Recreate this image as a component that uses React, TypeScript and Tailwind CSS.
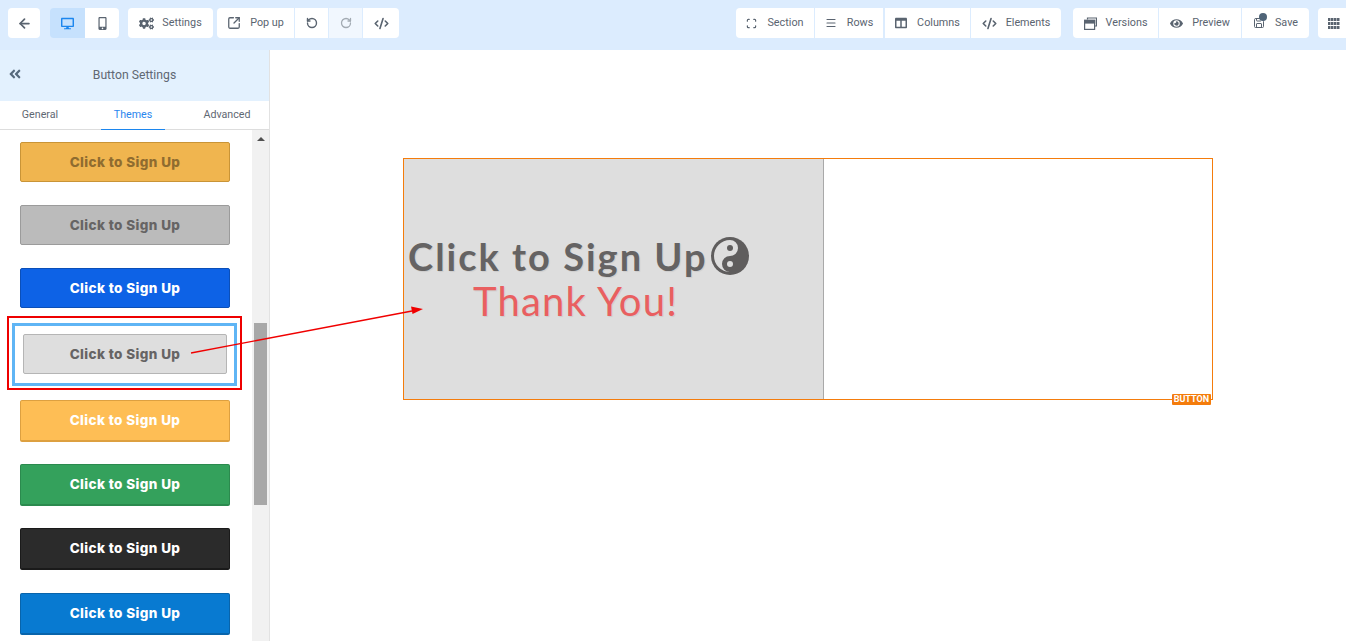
import React from 'react';
import { ArrowLeft, SquareArrowOutUpRight, RotateCcw, RotateCw, CodeXml, Scan, Menu, Save } from 'lucide-react';
import { FaCogs, FaAngleDoubleLeft, FaDesktop, FaMobileAlt, FaColumns, FaEye } from 'react-icons/fa';

type Theme = { cls: string; text: string };

const themes: Theme[] = [
  { cls: 'h-[40px] mb-[23px] bg-[#f0b54f] border-[#c99437]', text: 'text-[#8f6c2f]' },
  { cls: 'h-[40px] mb-[23px] bg-[#bbbbbb] border-[#9b9b9b]', text: 'text-[#666464]' },
  { cls: 'h-[40px] mb-[8px] bg-[#0d62e6] border-[#0b4fb8]', text: 'text-white' },
];

const themesBelow: Theme[] = [
  { cls: 'h-[42px] mb-[22px] bg-[#febe55] border-[#dda040] border-b-2', text: 'text-white -mt-px' },
  { cls: 'h-[42px] mb-[22px] bg-[#34a15c] border-[#2b8a4e] border-b-2', text: 'text-white -mt-px' },
  { cls: 'h-[42px] mb-[23px] bg-[#2b2b2b] border-[#1a1a1a] border-b-2', text: 'text-white' },
  { cls: 'h-[42px] bg-[#087ad1] border-[#0864ab] border-b-2', text: 'text-white -mt-px' },
];

function YinYang() {
  return (
    <svg width="38" height="38" viewBox="-19 -19 38 38" className="ml-[4px] shrink-0">
      <circle r="19" fill="#5f5d5d" />
      <path d="M0,-16 A16,16 0 0 0 0,16 A8,8 0 0 1 0,0 A8,8 0 0 0 0,-16 Z" fill="#dedede" />
      <circle cy="-8" r="3" fill="#5f5d5d" />
      <circle cy="8" r="3" fill="#dedede" />
    </svg>
  );
}

function VersionsIcon() {
  return (
    <svg width="13" height="13" viewBox="0 0 13 13" fill="none" stroke="currentColor" strokeWidth="1.2">
      <path d="M3.5 2.5V1h9v8H11" />
      <rect x="0.6" y="3.4" width="10" height="9" />
      <rect x="0.6" y="3.4" width="10" height="2.6" fill="currentColor" />
    </svg>
  );
}

function GridIcon() {
  return (
    <svg width="12" height="11" viewBox="0 0 12 11" fill="currentColor">
      {[0, 4, 8].map((y) =>
        [0, 3, 6, 9].map((x) => <rect key={`${x}-${y}`} x={x} y={y} width="2.5" height="3" />)
      )}
    </svg>
  );
}

function ToolBtn({ icon, label, className = '' }: { icon: React.ReactNode; label?: string; className?: string }) {
  return (
    <div className={`h-[30px] shrink-0 flex items-center justify-center bg-white text-[#5a6470] text-[10.8px] ${className}`}>
      {icon}
      {label && <span>{label}</span>}
    </div>
  );
}

function ThemeButton({ theme }: { theme: Theme }) {
  return (
    <div className={`w-[210px] ml-[20px] flex items-center justify-center rounded-[2px] border ${theme.cls}`}>
      <span className={`font-['Inter',sans-serif] font-extrabold text-[13.5px] tracking-[0.4px] ${theme.text}`}>Click to Sign Up</span>
    </div>
  );
}

export default function App() {
  return (
    <div className="relative w-[1346px] h-[641px] overflow-hidden bg-white font-['Roboto',sans-serif]">
      {/* top bar */}
      <header className="h-[50px] bg-[#dcecfe] flex items-start pt-[8px] pl-[8px]">
        <ToolBtn className="w-[32px] rounded-[4px]" icon={<ArrowLeft size={15} strokeWidth={2.8} />} />
        <div className="ml-[10px] shrink-0 flex rounded-[4px] overflow-hidden">
          <ToolBtn className="w-[35px] !bg-[#c6e1fd] !text-[#1c86ee]" icon={<FaDesktop size={13} />} />
          <ToolBtn className="w-[34px]" icon={<FaMobileAlt size={13} />} />
        </div>
        <ToolBtn className="ml-[9px] w-[85px] rounded-[4px] gap-[8px]" icon={<FaCogs size={15} />} label="Settings" />
        <div className="ml-[4px] shrink-0 flex gap-[1px] rounded-[4px] overflow-hidden">
          <ToolBtn className="w-[77px] gap-[9px]" icon={<SquareArrowOutUpRight size={14} strokeWidth={2.2} />} label="Pop up" />
          <ToolBtn className="w-[33px]" icon={<RotateCcw size={12} strokeWidth={2.8} />} />
          <ToolBtn className="w-[33px] !bg-[#f1f7fe] !text-[#a3abb3]" icon={<RotateCw size={12} strokeWidth={2.6} />} />
          <ToolBtn className="w-[36px]" icon={<CodeXml size={15} strokeWidth={2.6} />} />
        </div>
        <div className="ml-[337px] shrink-0 flex gap-[1px] rounded-[4px] overflow-hidden">
          <ToolBtn className="w-[78px] gap-[10px]" icon={<Scan size={11} strokeWidth={2.6} />} label="Section" />
          <ToolBtn className="w-[68px] gap-[10px]" icon={<Menu size={12} strokeWidth={2.2} />} label="Rows" />
          <ToolBtn className="ml-[1px] w-[85px] gap-[10px]" icon={<FaColumns size={12} />} label="Columns" />
          <ToolBtn className="w-[90px] gap-[9px]" icon={<CodeXml size={15} strokeWidth={2.6} />} label="Elements" />
        </div>
        <div className="ml-[12px] shrink-0 flex gap-[1px] rounded-[4px] overflow-hidden">
          <ToolBtn className="w-[85px] gap-[9px]" icon={<VersionsIcon />} label="Versions" />
          <ToolBtn className="w-[82px] gap-[9px]" icon={<FaEye size={13} />} label="Preview" />
          <ToolBtn
            className="w-[67px] gap-[10px]"
            icon={
              <span className="relative flex">
                <Save size={12} />
                <span className="absolute -top-[4px] left-[6px] w-[8px] h-[8px] rounded-full bg-[#4f6478]" />
              </span>
            }
            label="Save"
          />
        </div>
        <ToolBtn className="ml-[9px] w-[40px] rounded-l-[4px] !justify-start pl-[10px]" icon={<GridIcon />} />
      </header>

      <div className="flex h-[591px]">
        {/* sidebar */}
        <aside className="w-[270px] shrink-0 border-r border-[#e2e2e2] flex flex-col">
          <div className="relative h-[51px] bg-[#e3f1fe] flex items-center justify-center text-[#5f6873] text-[12.2px]">
            <FaAngleDoubleLeft size={14} className="absolute left-[8px] top-[17px] text-[#56697c]" />
            Button Settings
          </div>
          <div className="h-[29px] flex border-b border-[#dddddd] text-[10.7px] text-[#5f6873]">
            <div className="w-[80px] flex items-center justify-center">General</div>
            <div className="ml-[21px] w-[64px] -mb-px flex items-center justify-center text-[#2a86ee] border-b border-[#1c86ee]">Themes</div>
            <div className="ml-[25px] w-[74px] flex items-center justify-center">Advanced</div>
          </div>
          <div className="flex flex-1 min-h-0">
            <div className="w-[252px] pt-[12px] overflow-hidden">
              {themes.map((t, i) => <ThemeButton key={i} theme={t} />)}
              {/* picked theme, framed */}
              <div className="ml-[7px] w-[235px] h-[74px] border-[2px] border-[#ee0000] pt-[5px] pb-[2px] px-[3px] mb-[10px]">
                <div className="h-full border-[3px] border-[#5fb5f5] pt-[8px] pl-[8px] pr-[7px]">
                  <div className="h-[40px] flex items-center justify-center rounded-[2px] border border-[#b5b5b5] bg-[#dedede]">
                    <span className="font-['Inter',sans-serif] font-extrabold text-[13.5px] tracking-[0.4px] text-[#666464]">Click to Sign Up</span>
                  </div>
                </div>
              </div>
              {themesBelow.map((t, i) => <ThemeButton key={i} theme={t} />)}
            </div>
            <div className="w-[17px] bg-[#f1f1f1] flex flex-col items-center pt-[7px]">
              <div className="w-0 h-0 border-x-[4px] border-x-transparent border-b-[4px] border-b-[#505050]" />
              <div className="mt-[182px] w-[13px] h-[182px] bg-[#a8a8a8]" />
            </div>
          </div>
        </aside>

        {/* canvas */}
        <main className="flex-1 pl-[133px] pt-[108px]">
          <div className="relative w-[810px] h-[242px] border border-[#f47c0c] flex">
            <div className="w-[420px] h-full bg-[#dedede] border-r border-[#a9a9a9] pt-[74px] pl-[4px] font-['Lato',sans-serif] [text-shadow:1px_1px_1px_rgba(0,0,0,0.08)]">
              <div className="flex items-center h-[46px] text-[38px] font-bold tracking-[2px] text-[#656363] leading-none whitespace-nowrap">
                Click to Sign Up
                <YinYang />
              </div>
              <div className="ml-[65px] text-[40px] tracking-[1.2px] text-[#e95f60] leading-[44px] whitespace-nowrap">Thank You!</div>
            </div>
            <span className="absolute right-[1px] -bottom-[6px] h-[11px] px-[2px] rounded-[1px] bg-[#f47c0c] text-white text-[9px] font-bold leading-[11px]">BUTTON</span>
          </div>
        </main>
      </div>

      {/* annotation arrow */}
      <svg className="absolute left-0 top-0 pointer-events-none" width="1346" height="641">
        <line x1="191" y1="353" x2="412" y2="311" stroke="#f00000" strokeWidth="1.3" />
        <polygon points="423,309 411,306.5 412.5,314" fill="#f00000" />
      </svg>
    </div>
  );
}
